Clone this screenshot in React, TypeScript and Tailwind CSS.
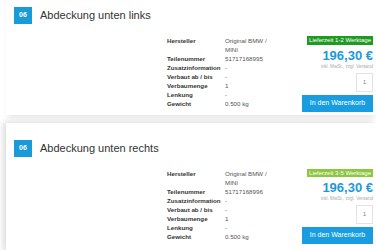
const rows = [
  { label: 'Teilenummer', key: 'nr' },
  { label: 'Zusatzinformation', key: 'info' },
  { label: 'Verbaut ab / bis', key: 'built' },
  { label: 'Verbaumenge', key: 'qty' },
  { label: 'Lenkung', key: 'steer' },
  { label: 'Gewicht', key: 'weight' },
] as const;

type Part = {
  title: string;
  nr: string;
  delivery: string;
  fast: boolean;
};

const parts: Part[] = [
  { title: 'Abdeckung unten links', nr: '51717168995', delivery: 'Lieferzeit 1-2 Werktage', fast: true },
  { title: 'Abdeckung unten rechts', nr: '51717168996', delivery: 'Lieferzeit 3-5 Werktage', fast: false },
];

function PartCard({ part, first }: { part: Part; first?: boolean }) {
  const values: Record<string, string> = {
    nr: part.nr,
    info: '-',
    built: '-',
    qty: '1',
    steer: '-',
    weight: '0.500 kg',
  };

  return (
    <div
      className={
        first
          ? 'bg-white mt-[-10px] ml-[6px] pl-[8px] pr-[3px] pt-[17px] pb-[3px] shadow-[0_5px_6px_-2px_rgba(0,0,0,0.1)]'
          : 'bg-white mt-[8px] ml-[6px] pl-[8px] pr-[3px] pt-[17px] pb-[8px] shadow-[-3px_-1px_6px_rgba(0,0,0,0.14)]'
      }
    >
      <div className="flex items-center gap-[8px] h-[17px]">
        <div className="w-[18px] h-[17px] bg-[#1b9ad8] text-white text-[7px] font-bold flex items-center justify-center">
          06
        </div>
        <div className="text-[11px] text-[#333] leading-none">{part.title}</div>
      </div>

      <div className="flex mt-[12px] ml-[153px]">
        <div className="w-[135px] text-[6.2px] text-[#333]">
          <div className="flex h-[18px] leading-[9px]">
            <div className="w-[58px] font-bold">Hersteller</div>
            <div className="text-[#555]">
              Original BMW /
              <br />
              MINI
            </div>
          </div>
          {rows.map((r) => (
            <div key={r.key} className="flex h-[9px] leading-[9px]">
              <div className="w-[58px] font-bold whitespace-nowrap">{r.label}</div>
              <div className="text-[#555]">{values[r.key]}</div>
            </div>
          ))}
        </div>

        <div className="w-[71px] ml-auto flex flex-col items-end">
          <div
            className={
              part.fast
                ? 'h-[8.5px] px-[2px] bg-[#1f9b23] text-white text-[6px] leading-[8.5px] whitespace-nowrap'
                : 'h-[8.5px] px-[2px] bg-[#8dc63f] text-white text-[6px] leading-[8.5px] whitespace-nowrap'
            }
          >
            {part.delivery}
          </div>
          <div className="mt-[4px] text-[13px] leading-[14px] font-bold text-[#1d9ad6]">196,30 €</div>
          <div className="mt-[1px] text-[4.6px] leading-[6px] text-[#aaa] whitespace-nowrap">
            inkl. MwSt., zzgl. Versand
          </div>
          <div className="mt-[3px] w-[17px] h-[19px] border border-[#e3e3e3] flex items-center justify-center text-[5.5px] text-[#777]">
            1
          </div>
          <button className="mt-[3px] w-[71px] h-[17px] bg-[#1a9de0] text-white text-[7px] flex items-center justify-center">
            In den Warenkorb
          </button>
        </div>
      </div>
    </div>
  );
}

export default function App() {
  return (
    <div
      className="w-[376px] h-[250px] overflow-hidden bg-white"
      style={{ fontFamily: '"Liberation Sans", Arial, sans-serif' }}
    >
      {parts.map((p, i) => (
        <PartCard key={p.nr} part={p} first={i === 0} />
      ))}
    </div>
  );
}
